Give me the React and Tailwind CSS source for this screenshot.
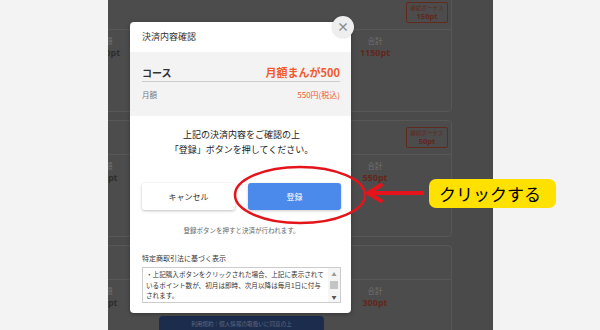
const cards = [
  { base: '1000pt', bonus: '150pt', total: '1150pt' },
  { base: '500pt', bonus: '50pt', total: '550pt' },
  { base: '300pt', bonus: null, total: '300pt' },
]

const PlanCard = ({ base, bonus, total, first, children }) => (
  <div className={`${first ? '-mt-[5px]' : ''} -ml-[34px] h-[117px] w-[378px] shrink-0 rounded-[4px] border border-[#575757] bg-[#4c4c4c]`}>
    <div className="flex h-[34px] items-center justify-end border-b border-[#575757] pr-[3px]">
      {bonus && (
        <div className="flex h-[21px] w-[42px] flex-col items-center justify-center rounded-[2px] border border-[#62291f] text-[#61271d]">
          <span className="text-[5.5px] leading-[7px]">継続ボーナス</span>
          <span className="font-['Open_Sans',sans-serif] text-[7.5px] font-bold leading-[9px]">{bonus}</span>
        </div>
      )}
    </div>
    <div className="flex pt-[5px]">
      <div className="flex w-[60px] flex-col items-center">
        <span className="text-[7.5px] leading-[12px] text-[#737373]">金額</span>
        <span className="font-['Open_Sans',sans-serif] text-[9px] font-bold leading-[12px] text-[#2e2e2e]">{base}</span>
      </div>
      <div className="flex-1" />
      <div className="flex w-[152px] flex-col items-center">
        <span className="text-[7.5px] leading-[12px] text-[#737373]">合計</span>
        <span className="font-['Open_Sans',sans-serif] text-[9px] font-bold leading-[12px] text-[#61271d]">{total}</span>
      </div>
    </div>
    {children}
  </div>
)

export default function App() {
  return (
    <div className="relative flex h-[330px] w-[600px] overflow-hidden bg-[#f3f3f3] font-['Noto_Sans_CJK_JP','Noto_Sans',sans-serif]">
      <div className="w-[108px] shrink-0" />

      {/* page column under the overlay */}
      <div className="flex h-[330px] w-[385px] shrink-0 flex-col gap-[8px] overflow-hidden bg-[#4a4a4a]">
        <PlanCard {...cards[0]} first />
        <PlanCard {...cards[1]} />
        <PlanCard {...cards[2]}>
          <div className="ml-[84px] mt-[7px] flex h-[30px] w-[165px] items-start justify-center rounded-[4px] bg-[#1c2c4d] pt-[4px]">
            <span className="text-[5.6px] text-[#5f6a80]">利用規約｜個人情報の取扱いに同意の上</span>
          </div>
        </PlanCard>
      </div>

      <div className="flex-1" />

      {/* modal */}
      <div className="absolute left-[130px] top-[22px] flex w-[221px] flex-col overflow-hidden rounded-[4px] bg-white shadow-[0_1px_4px_rgba(0,0,0,0.3)]">
        <div className="flex h-[30px] items-center px-[12px] text-[9px] text-[#333]">決済内容確認</div>
        <div className="flex h-[64px] flex-col bg-[#f3f3f3] pl-[12px] pr-[11px] pt-[12px]">
          <div className="flex h-[18px] items-center justify-between border-b border-[#cccccc]">
            <span className="text-[10px] font-bold text-[#333]">コース</span>
            <span className="text-[11px] font-bold text-[#f25a2c]">月額まんが500</span>
          </div>
          <div className="mt-[7px] flex h-[12px] items-center justify-between">
            <span className="text-[7.5px] text-[#777]">月額</span>
            <span className="text-[8px] text-[#f25a2c]">550円(税込)</span>
          </div>
        </div>

        <div className="flex flex-col pb-[10px] pl-[12px] pr-[10px] pt-[11px]">
          <p className="text-center text-[9px] leading-[15px] text-[#222]">
            上記の決済内容をご確認の上
            <br />
            「登録」ボタンを押してください。
          </p>

          <div className="mt-[26px] grid grid-cols-2 gap-[13px]">
            <button className="flex h-[27px] items-center justify-center rounded-[3px] bg-white text-[8px] text-[#333] shadow-[0_1px_3px_rgba(0,0,0,0.25)]">
              キャンセル
            </button>
            <button className="flex h-[27px] items-center justify-center rounded-[3px] bg-[#4b89ea] text-[8px] text-white shadow-[0_1px_3px_rgba(0,0,0,0.2)]">
              登録
            </button>
          </div>

          <p className="mt-[15px] text-center text-[6.5px] leading-[10px] text-[#666]">登録ボタンを押すと決済が行われます。</p>

          <p className="mt-[18px] text-[7px] leading-[10px] text-[#333]">特定商取引法に基づく表示</p>

          <div className="mt-[4px] flex h-[36px] border border-[#cccccc]">
            <p className="flex-1 overflow-hidden px-[3px] pt-[1px] text-[6.6px] leading-[10.5px] text-[#333]">
              ・上記購入ボタンをクリックされた場合、上記に表示されているポイント数が、初月は即時、次月以降は毎月1日に付与されます。
            </p>
            <div className="flex w-[12px] flex-col items-center bg-[#f5f5f5]">
              <span className="mt-[2px] text-[5px] leading-[8px] text-[#999]">▲</span>
              <div className="mt-[3px] h-[8px] w-[8px] bg-[#c4c4c4]" />
              <span className="mt-[4px] text-[5px] leading-[8px] text-[#555]">▼</span>
            </div>
          </div>
        </div>
      </div>

      {/* close button */}
      <div className="absolute left-[332px] top-[16px] flex h-[22px] w-[22px] items-center justify-center rounded-full bg-[#eeeeee] text-[12px] font-bold leading-none text-[#8a8a8a] shadow-[0_0_2px_rgba(0,0,0,0.15)]">
        ×
      </div>

      {/* annotation */}
      <svg className="pointer-events-none absolute left-0 top-0" width="600" height="330" viewBox="0 0 600 330">
        <ellipse cx="300" cy="195" rx="65" ry="28" fill="none" stroke="#e5141b" strokeWidth="2.5" />
        <line x1="369" y1="193" x2="424" y2="193" stroke="#e5141b" strokeWidth="4" />
        <polyline points="381,185 368,193 381,201" fill="none" stroke="#e5141b" strokeWidth="4" strokeLinecap="round" strokeLinejoin="round" />
      </svg>

      <div className="absolute left-[429px] top-[179px] flex h-[29px] w-[127px] items-center rounded-[7px] bg-[#ffe100] pl-[10px] text-[17px] leading-none text-black">
        クリックする
      </div>
    </div>
  )
}
